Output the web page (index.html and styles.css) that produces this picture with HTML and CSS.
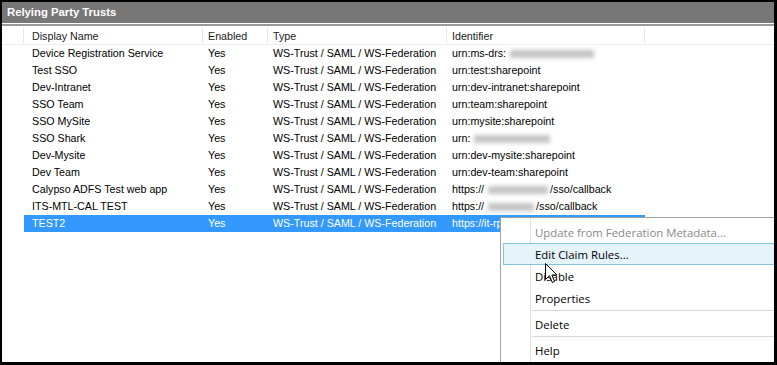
FILE: index.html
```html
<!DOCTYPE html>
<html lang="en">
<head>
  <meta charset="UTF-8">
  <title>Relying Party Trusts</title>
  <link rel="stylesheet" href="styles.css">
</head>
<body>
  <div class="marco">
    <div class="titulo">Relying Party Trusts</div>
    <div class="raya"></div>

    <!-- cabecera de la lista -->
    <div class="fila cabecera">
      <div class="celda icono"></div>
      <div class="celda nombre">Display Name</div>
      <div class="celda">Enabled</div>
      <div class="celda">Type</div>
      <div class="celda">Identifier</div>
      <div class="celda resto"></div>
    </div>

    <div class="fila">
      <div class="celda icono"></div>
      <div class="celda nombre">Device Registration Service</div>
      <div class="celda">Yes</div>
      <div class="celda">WS-Trust / SAML / WS-Federation</div>
      <div class="celda">urn:ms-drs:<span class="borroso ancho85"></span></div>
    </div>
    <div class="fila">
      <div class="celda icono"></div>
      <div class="celda nombre">Test SSO</div>
      <div class="celda">Yes</div>
      <div class="celda">WS-Trust / SAML / WS-Federation</div>
      <div class="celda">urn:test:sharepoint</div>
    </div>
    <div class="fila">
      <div class="celda icono"></div>
      <div class="celda nombre">Dev-Intranet</div>
      <div class="celda">Yes</div>
      <div class="celda">WS-Trust / SAML / WS-Federation</div>
      <div class="celda">urn:dev-intranet:sharepoint</div>
    </div>
    <div class="fila">
      <div class="celda icono"></div>
      <div class="celda nombre">SSO Team</div>
      <div class="celda">Yes</div>
      <div class="celda">WS-Trust / SAML / WS-Federation</div>
      <div class="celda">urn:team:sharepoint</div>
    </div>
    <div class="fila">
      <div class="celda icono"></div>
      <div class="celda nombre">SSO MySite</div>
      <div class="celda">Yes</div>
      <div class="celda">WS-Trust / SAML / WS-Federation</div>
      <div class="celda">urn:mysite:sharepoint</div>
    </div>
    <div class="fila">
      <div class="celda icono"></div>
      <div class="celda nombre">SSO Shark</div>
      <div class="celda">Yes</div>
      <div class="celda">WS-Trust / SAML / WS-Federation</div>
      <div class="celda">urn:<span class="borroso ancho78"></span></div>
    </div>
    <div class="fila">
      <div class="celda icono"></div>
      <div class="celda nombre">Dev-Mysite</div>
      <div class="celda">Yes</div>
      <div class="celda">WS-Trust / SAML / WS-Federation</div>
      <div class="celda">urn:dev-mysite:sharepoint</div>
    </div>
    <div class="fila">
      <div class="celda icono"></div>
      <div class="celda nombre">Dev Team</div>
      <div class="celda">Yes</div>
      <div class="celda">WS-Trust / SAML / WS-Federation</div>
      <div class="celda">urn:dev-team:sharepoint</div>
    </div>
    <div class="fila">
      <div class="celda icono"></div>
      <div class="celda nombre">Calypso ADFS Test web app</div>
      <div class="celda">Yes</div>
      <div class="celda">WS-Trust / SAML / WS-Federation</div>
      <div class="celda">https://<span class="borroso ancho62"></span>/sso/callback</div>
    </div>
    <div class="fila">
      <div class="celda icono"></div>
      <div class="celda nombre">ITS-MTL-CAL TEST</div>
      <div class="celda">Yes</div>
      <div class="celda">WS-Trust / SAML / WS-Federation</div>
      <div class="celda">https://<span class="borroso ancho48"></span>/sso/callback</div>
    </div>
    <div class="fila elegida">
      <div class="celda icono"></div>
      <div class="celda nombre">TEST2</div>
      <div class="celda">Yes</div>
      <div class="celda">WS-Trust / SAML / WS-Federation</div>
      <div class="celda">https://it-rp.sharepoint</div>
    </div>

    <!-- menú contextual -->
    <div class="menu">
      <div class="opcion apagada">Update from Federation Metadata...</div>
      <div class="opcion activa">Edit Claim Rules...</div>
      <div class="opcion">Disable</div>
      <div class="opcion">Properties</div>
      <div class="separador"></div>
      <div class="opcion">Delete</div>
      <div class="separador"></div>
      <div class="opcion">Help</div>
    </div>

    <svg class="cursor" width="13" height="21" viewBox="0 0 13 21">
      <path d="M0.5 0.5 L0.5 16.5 L4.5 12.8 L7.3 19.5 L9.6 18.5 L6.9 12 L12 12 Z" fill="#fff" stroke="#000" stroke-width="1"/>
    </svg>
  </div>
</body>
</html>
```

FILE: styles.css
```css
body {
  margin: 0;
  background: #fff;
}

.marco {
  position: relative;
  box-sizing: border-box;
  width: 777px;
  height: 365px;
  border-style: solid;
  border-color: #000;
  border-width: 2px 3px 3px 2px;
  overflow: hidden;
  background: #fff;
  font-family: "Liberation Sans", Arial, sans-serif;
  font-size: 10.7px;
  color: #000;
}

.titulo {
  height: 21px;
  line-height: 20px;
  background: #777;
  color: #fff;
  font-weight: bold;
  font-size: 11.3px;
  padding-left: 5px;
}

.raya {
  height: 2px;
  border-top: 1px solid #fff;
  border-bottom: 1px solid #fff;
  background: #9a9a9a;
}

.fila {
  display: grid;
  grid-template-columns: 22px 179px 65px 179px 198px 1fr;
  height: 17px;
  line-height: 17px;
  white-space: nowrap;
}

.celda {
  padding-left: 5px;
  overflow: hidden;
}

.celda.icono {
  padding: 0;
}

.celda.nombre {
  padding-left: 8px;
}

.cabecera {
  height: 17px;
  border-bottom: 1px solid #f0f0f0;
  color: #1a1a1a;
}

.cabecera .celda {
  border-right: 1px solid #e5e5e5;
  margin: 1px 0 1px 0;
  line-height: 17px;
}

.cabecera .celda.resto {
  border-right: none;
}

.elegida .celda {
  background: #3399ff;
  color: #fff;
}

.elegida .celda.icono {
  background: transparent;
}

.borroso {
  display: inline-block;
  height: 8px;
  vertical-align: -1px;
  margin-left: 4px;
  background: #c4c4c4;
  filter: blur(2px);
}

.ancho85 { width: 84px; }
.ancho78 { width: 76px; }
.ancho62 { width: 60px; margin-right: 2px; }
.ancho48 { width: 46px; margin-right: 2px; }

.menu {
  position: absolute;
  left: 498px;
  top: 215px;
  width: 290px;
  padding: 3px 0 3px 2px;
  background: #fff;
  border: 1px solid #a0a0a0;
  font-family: "Open Sans", "Noto Sans", sans-serif;
  font-size: 11.4px;
  color: #000;
}

/* línea vertical del margen de iconos */
.menu::before {
  content: "";
  position: absolute;
  left: 29px;
  top: 0;
  bottom: 0;
  border-left: 1px solid #e2e2e2;
}

.opcion {
  box-sizing: border-box;
  height: 22px;
  line-height: 21px;
  padding-left: 31px;
  border: 1px solid transparent;
}

.opcion.apagada {
  color: #8a8a8a;
}

.opcion.activa {
  position: relative;
  background: #e5f3fb;
  border-color: #7fc6dd;
}

.separador {
  height: 0;
  margin: 1px 0 2px 29px;
  border-top: 1px solid #d7d7d7;
}

.cursor {
  position: absolute;
  left: 543px;
  top: 261px;
}
```
